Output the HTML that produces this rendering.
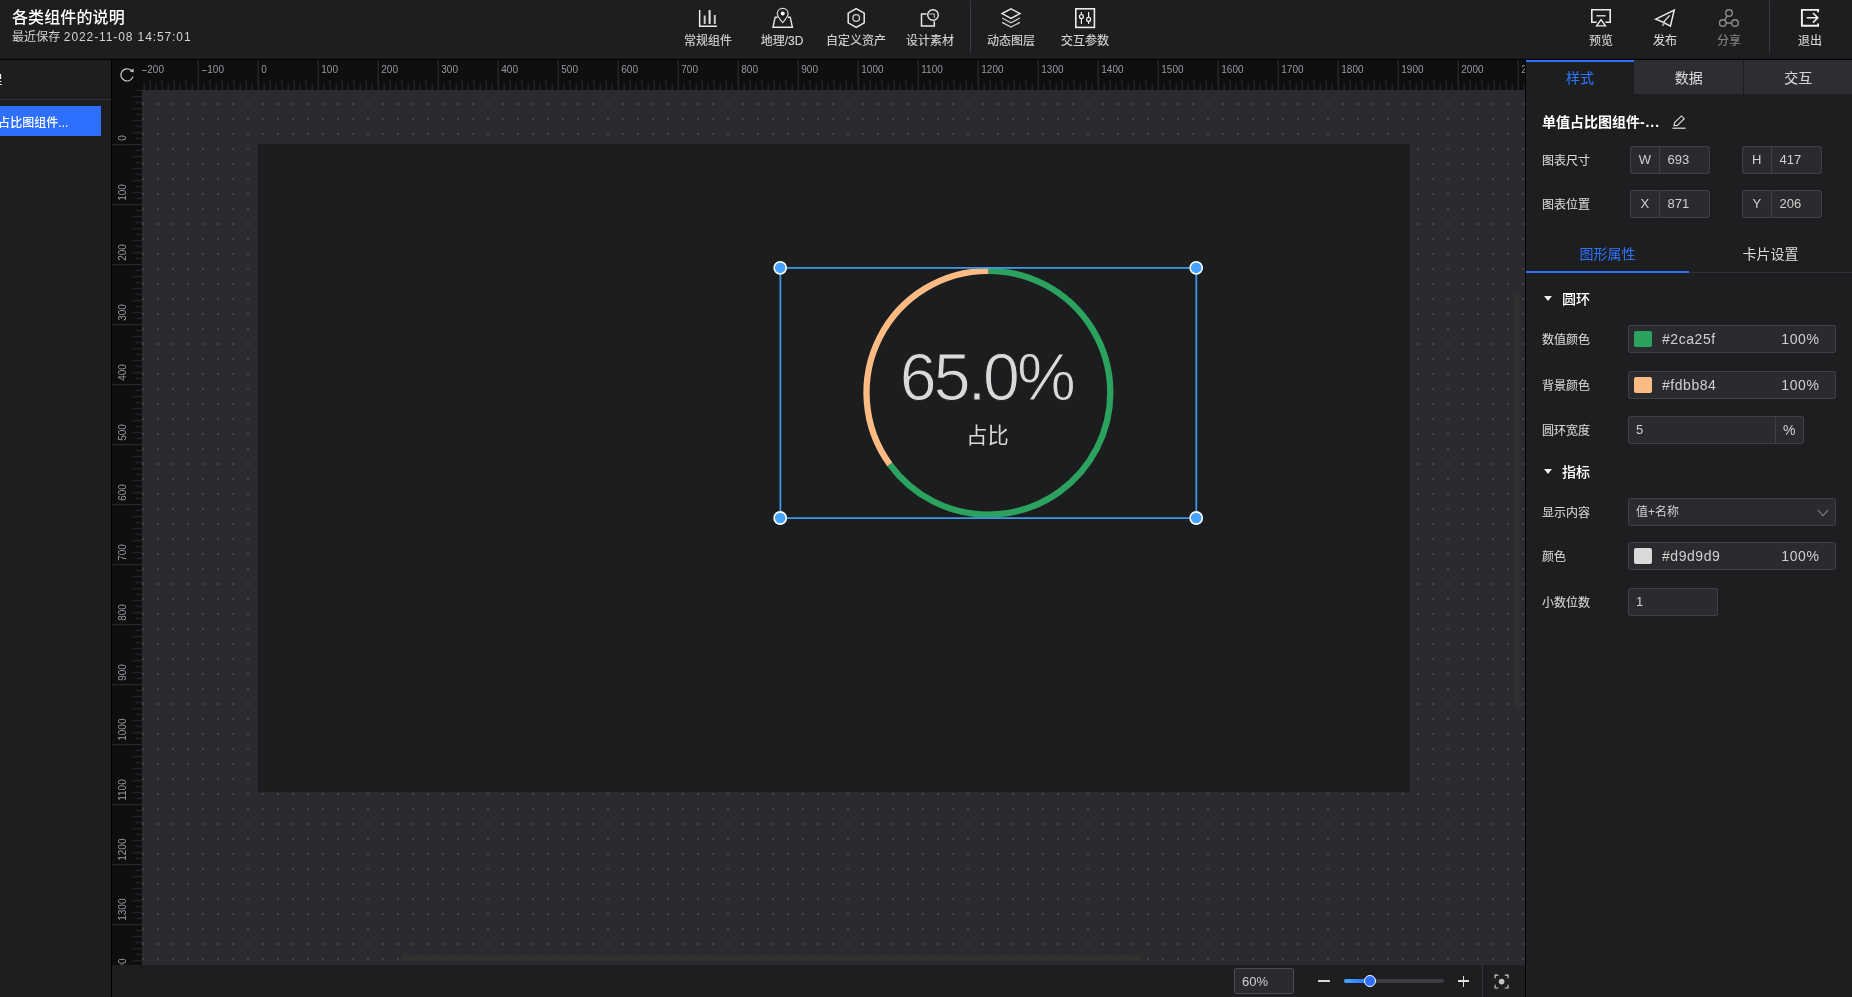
<!DOCTYPE html>
<html lang="zh-CN">
<head>
<meta charset="utf-8">
<title>各类组件的说明</title>
<style>
*{box-sizing:border-box;margin:0;padding:0}
html,body{width:1852px;height:997px;overflow:hidden;background:#1d1e20}
body{position:relative;will-change:transform;font-family:"Liberation Sans","Noto Sans CJK SC",sans-serif;color:#d4d4d4;font-size:12px;line-height:1}
.abs{position:absolute}
svg{position:absolute;overflow:visible}
/* header */
#hd{position:absolute;left:0;top:0;width:1852px;height:60px;background:#1d1e20;border-bottom:1px solid #030303;box-shadow:inset 0 -1px 0 #18191b}
#ttl{position:absolute;left:12px;top:9px;font-size:16px;line-height:18px;font-weight:500;color:#fff;white-space:nowrap;letter-spacing:0.12px}
#sav{position:absolute;left:12px;top:30px;font-size:12px;line-height:14px;color:#d2d2d2;white-space:nowrap;letter-spacing:0.1px}
#sav span{letter-spacing:0.9px}
.tb{position:absolute;top:0;width:74px;height:59px;text-align:center}
.tb span{-webkit-text-stroke:0.12px;position:absolute;left:-20px;right:-20px;top:33.7px;font-size:12px;line-height:14px;color:#d6d6d6;white-space:nowrap}
.tb.dis span{color:#858585}
.vsep{position:absolute;top:1px;width:1px;height:52px;background:#3a3b3e}
/* left */
#lp{position:absolute;left:0;top:60px;width:112px;height:937px;background:#1d1e20;overflow:hidden;border-right:1px solid #060607}
#lp .h{position:absolute;left:-46px;top:14px;width:48px;font-size:12px;line-height:12px;color:#fff;font-weight:500;white-space:nowrap}
#lp .ln{position:absolute;left:0;top:39px;width:111px;height:1px;background:#303134}
#lp .it{position:absolute;left:0;top:46px;width:101px;height:30px;background:#2e6fff;color:#fff;font-size:12px;line-height:30px;white-space:nowrap;overflow:hidden}
#lp .it b{font-weight:500;position:absolute;left:-26px;top:2.1px;letter-spacing:0.05px}
/* rulers + canvas */
#rb{position:absolute;left:111px;top:60px;width:1415px;height:937px;background:#0e0e0f;border-right:1px solid #000;border-left:1px solid #000}
#cv{position:absolute;left:142px;top:90px;width:1383px;height:875px;background-color:#2a2b2e;
background-image:radial-gradient(circle at 1px 1px,#434448 0.9px,rgba(67,68,72,0) 1.35px);background-size:15px 15px;background-position:0px -2px;overflow:hidden}
#pg{position:absolute;left:116px;top:54px;width:1152px;height:648px;background:#1c1d1f}
#rl text{font-family:"Liberation Sans",sans-serif;font-size:10px;fill:#95989e}
/* bottom */
#bt{position:absolute;left:112px;top:965px;width:1413px;height:32px;background:#1d1e20}
/* right panel */
#rp{position:absolute;left:1526px;top:60px;width:326px;height:937px;background:#1d1e20}
.tab{position:absolute;top:0;height:34px;line-height:36px;text-align:center;font-size:14px;color:#d4d4d4;background:#2d2e31;-webkit-text-stroke:0.1px}
.tab.on{background:#1d1e20;color:#2e74ff;border-top:2px solid #2e6fff;line-height:32px}
.lab{position:absolute;left:16px;font-size:12px;line-height:14px;color:#d6d6d6;white-space:nowrap;margin-top:0.6px;-webkit-text-stroke:0.1px #d6d6d6}
.box{position:absolute;height:28px;background:#2a2b2e;border:1px solid #3f4044;border-radius:2px;font-size:13px;line-height:26px;color:#d0d0d0;white-space:nowrap}
.box i{position:absolute;top:0;bottom:0;width:1px;background:#3f4044}
.box .p{position:absolute;left:0;top:0;width:27.6px;text-align:center;font-size:13px}
.box .v{position:absolute;top:0}
.sw{position:absolute;left:5px;top:5px;width:18px;height:16px;border-radius:2px}
.hex{position:absolute;left:33px;top:0;font-size:14px;letter-spacing:0.55px}
.pct{position:absolute;right:15.5px;top:0;font-size:14px;letter-spacing:0.6px}
.sec{position:absolute;left:36px;font-size:14px;line-height:16px;color:#fff;font-weight:500;white-space:nowrap}
.tri{position:absolute;left:17.6px;width:0;height:0;border-left:4.6px solid transparent;border-right:4.6px solid transparent;border-top:5.6px solid #ececec}
</style>
</head>
<body>
<!-- ================= HEADER ================= -->
<div id="hd">
  <div id="ttl">各类组件的说明</div>
  <div id="sav">最近保存 <span>2022-11-08 14:57:01</span></div>
  <!-- center tools -->
  <div class="tb" style="left:671px"><svg style="left:28px;top:9px" width="20" height="20" viewBox="0 0 20 20" fill="none" stroke="#ececec" stroke-width="1.5"><path d="M0.65 1.1 V17.35 H17.9"/><path d="M10.6 1.1 V14.9" stroke-width="2"/><path d="M5.7 6.4 V14.9 M15.8 6 V14.9" stroke-width="2" stroke="#c9c9c9"/></svg><span>常规组件</span></div>
  <div class="tb" style="left:745px"><svg style="left:27px;top:7px" width="22" height="22" viewBox="0 0 22 22" fill="none" stroke="#e8e8e8" stroke-width="1.4"><path d="M5.6 10.2 H3.2 L1 20.2 H20.4 L18.2 10.2 H15.8"/><path d="M10.7 1.3 C7.5 1.3 5.3 3.7 5.3 6.6 C5.3 9.8 8 12.6 10.7 15.6 C13.4 12.6 16.1 9.8 16.1 6.6 C16.1 3.7 13.9 1.3 10.7 1.3 Z" stroke="#d8d8d8" stroke-width="1.2"/><circle cx="10.7" cy="6.6" r="2" fill="#fff" stroke="none"/></svg><span>地理/3D</span></div>
  <div class="tb" style="left:819px"><svg style="left:27px;top:7px" width="22" height="22" viewBox="0 0 22 22" fill="none" stroke="#e8e8e8" stroke-width="1.5"><path d="M10.2 1.6 L18.2 6.2 V15.8 L10.2 20.4 L2.2 15.8 V6.2 Z"/><circle cx="10.2" cy="11" r="3.3" stroke="#cfcfcf" stroke-width="1.3"/></svg><span>自定义资产</span></div>
  <div class="tb" style="left:893px"><svg style="left:26px;top:7px" width="22" height="22" viewBox="0 0 22 22" fill="none" stroke="#e8e8e8" stroke-width="1.5"><path d="M7.6 7 H2.5 V19 H15.3 V14.2"/><circle cx="14" cy="8" r="5.3" stroke-width="1.4"/><path d="M10.2 7 H15.3 V11" stroke="#bdbdbd" stroke-width="1.1"/></svg><span>设计素材</span></div>
  <div class="vsep" style="left:970px"></div>
  <div class="tb" style="left:974px"><svg style="left:26px;top:7px" width="22" height="22" viewBox="0 0 22 22" fill="none" stroke="#e8e8e8" stroke-width="1.4" stroke-linejoin="miter"><path d="M11 1.8 L20 6.6 L11 11.4 L2 6.6 Z"/><path d="M2.1 11 L11 15.7 L19.9 11" stroke="#cfcfcf" stroke-width="1.2"/><path d="M2.1 15.4 L11 20.1 L19.9 15.4" stroke="#cfcfcf" stroke-width="1.2"/></svg><span>动态图层</span></div>
  <div class="tb" style="left:1048px"><svg style="left:26px;top:7px" width="22" height="22" viewBox="0 0 22 22" fill="none" stroke="#ececec" stroke-width="1.6"><rect x="1.8" y="1.8" width="18.6" height="18.6"/><path d="M7.4 5 V7.6 M7.4 11.6 V17 M14.6 5 V10.4 M14.6 14.4 V17" stroke-width="1.2"/><circle cx="7.4" cy="9.6" r="2" stroke-width="1.2"/><circle cx="14.6" cy="12.4" r="2" stroke-width="1.2"/></svg><span>交互参数</span></div>
  <!-- right tools -->
  <div class="tb" style="left:1564px"><svg style="left:26px;top:8px" width="22" height="20" viewBox="0 0 22 20" fill="none" stroke="#ececec" stroke-width="1.6"><path d="M6.6 14.2 H1.8 V1.8 H20.2 V14.2 H15.4"/><path d="M6.4 7.8 H15.6" stroke-width="1.3"/><path d="M11 11.6 L15.4 17.9 H6.6 Z" stroke-width="1.4"/></svg><span>预览</span></div>
  <div class="tb" style="left:1628px"><svg style="left:26px;top:8px" width="22" height="20" viewBox="0 0 22 20" fill="none" stroke="#ececec" stroke-width="1.5" stroke-linejoin="miter"><path d="M1.8 11.2 L20.2 2.2 L16.4 18.2 L9.4 14.4 Z"/><path d="M9.4 14.4 L15.6 7.4" stroke-width="1.3"/><path d="M9.4 14.4 L8.6 18 L10.8 15.4" stroke-width="1" stroke="#bbb"/></svg><span>发布</span></div>
  <div class="tb dis" style="left:1692px"><svg style="left:26px;top:8px" width="22" height="20" viewBox="0 0 22 20" fill="none" stroke="#8d8d8d" stroke-width="1.4"><circle cx="11" cy="5" r="3.3"/><circle cx="4.8" cy="15" r="3.3"/><circle cx="17" cy="15" r="3.3"/><path d="M9.2 7.8 L6.6 12.2 M8.1 15 H13.7"/></svg><span>分享</span></div>
  <div class="vsep" style="left:1769px"></div>
  <div class="tb" style="left:1773px"><svg style="left:27px;top:8px" width="22" height="20" viewBox="0 0 22 20" fill="none" stroke="#f2f2f2" stroke-width="1.9"><path d="M18.1 4.2 V1.9 H1.9 V17.7 H18.1 V15.4"/><path d="M6.8 9.8 H17.6 M13 5 L17.8 9.8 L13 14.6" stroke-width="1.6"/></svg><span>退出</span></div>

</div>
<!-- ================= LEFT PANEL ================= -->
<div id="lp">
  <div class="h">图层管理</div>
  <div class="ln"></div>
  <div class="it"><b>单值占比图组件...</b></div>
</div>
<!-- ================= RULERS / CANVAS ================= -->
<div id="rb"></div>
<div id="cv">
  <div id="pg"></div>
  <div class="abs" style="left:1373px;top:203px;width:5.8px;height:416.6px;border-radius:3px;background:rgba(48,48,48,0.9)"></div>
</div>
<!-- ================= CHART (page coords) ================= -->
<svg id="ch1" style="left:0;top:0" width="1852" height="997" viewBox="0 0 1852 997">
<g fill="none" stroke-width="6.3">
<path d="M988.40 270.80 A121.9 121.9 0 1 1 889.78 464.35" stroke="#2ca25f"/>
<path d="M889.78 464.35 A121.9 121.9 0 0 1 988.40 270.80" stroke="#fdbb84"/>
</g>
<text x="986.4" y="400.2" text-anchor="middle" font-family="'Liberation Sans',sans-serif" font-size="66.2" letter-spacing="-2.9" fill="#d9d9d9" stroke="#1c1d1f" stroke-width="1.1" paint-order="fill stroke">65.0%</text>
<text x="987.5" y="443.2" text-anchor="middle" font-family="'Liberation Sans','Noto Sans CJK SC',sans-serif" font-size="21.2" fill="#d9d9d9">占比</text>
<rect x="780.4" y="267.9" width="415.9" height="250.2" fill="none" stroke="#3f95e8" stroke-width="1.8"/>
<g fill="#45a3ff" stroke="#fff" stroke-width="1.6">
<circle cx="780.2" cy="267.8" r="6.1"/><circle cx="1196.2" cy="267.8" r="6.1"/><circle cx="780.2" cy="518" r="6.1"/><circle cx="1196.2" cy="518" r="6.1"/>
</g>
</svg>

<svg id="rl" style="left:0;top:0" width="1852" height="997" viewBox="0 0 1852 997">
<defs><clipPath id="ch"><rect x="142" y="60" width="1383" height="30"/></clipPath><clipPath id="cvv"><rect x="112" y="90" width="30" height="875"/></clipPath></defs>
<g clip-path="url(#ch)">
<rect x="143.4" y="83" width="1.5" height="7" fill="#222326"/>
<rect x="149.4" y="80" width="1.5" height="10" fill="#222326"/>
<rect x="155.4" y="83" width="1.5" height="7" fill="#222326"/>
<rect x="161.4" y="80" width="1.5" height="10" fill="#222326"/>
<rect x="167.4" y="83" width="1.5" height="7" fill="#222326"/>
<rect x="173.4" y="80" width="1.5" height="10" fill="#222326"/>
<rect x="179.4" y="83" width="1.5" height="7" fill="#222326"/>
<rect x="185.4" y="80" width="1.5" height="10" fill="#222326"/>
<rect x="191.4" y="83" width="1.5" height="7" fill="#222326"/>
<rect x="197.5" y="60" width="1.4" height="30" fill="#26272a"/>
<rect x="203.4" y="83" width="1.5" height="7" fill="#222326"/>
<rect x="209.4" y="80" width="1.5" height="10" fill="#222326"/>
<rect x="215.4" y="83" width="1.5" height="7" fill="#222326"/>
<rect x="221.4" y="80" width="1.5" height="10" fill="#222326"/>
<rect x="227.4" y="83" width="1.5" height="7" fill="#222326"/>
<rect x="233.4" y="80" width="1.5" height="10" fill="#222326"/>
<rect x="239.4" y="83" width="1.5" height="7" fill="#222326"/>
<rect x="245.4" y="80" width="1.5" height="10" fill="#222326"/>
<rect x="251.4" y="83" width="1.5" height="7" fill="#222326"/>
<rect x="257.5" y="60" width="1.4" height="30" fill="#26272a"/>
<rect x="263.4" y="83" width="1.5" height="7" fill="#222326"/>
<rect x="269.4" y="80" width="1.5" height="10" fill="#222326"/>
<rect x="275.4" y="83" width="1.5" height="7" fill="#222326"/>
<rect x="281.4" y="80" width="1.5" height="10" fill="#222326"/>
<rect x="287.4" y="83" width="1.5" height="7" fill="#222326"/>
<rect x="293.4" y="80" width="1.5" height="10" fill="#222326"/>
<rect x="299.4" y="83" width="1.5" height="7" fill="#222326"/>
<rect x="305.4" y="80" width="1.5" height="10" fill="#222326"/>
<rect x="311.4" y="83" width="1.5" height="7" fill="#222326"/>
<rect x="317.5" y="60" width="1.4" height="30" fill="#26272a"/>
<rect x="323.4" y="83" width="1.5" height="7" fill="#222326"/>
<rect x="329.4" y="80" width="1.5" height="10" fill="#222326"/>
<rect x="335.4" y="83" width="1.5" height="7" fill="#222326"/>
<rect x="341.4" y="80" width="1.5" height="10" fill="#222326"/>
<rect x="347.4" y="83" width="1.5" height="7" fill="#222326"/>
<rect x="353.4" y="80" width="1.5" height="10" fill="#222326"/>
<rect x="359.4" y="83" width="1.5" height="7" fill="#222326"/>
<rect x="365.4" y="80" width="1.5" height="10" fill="#222326"/>
<rect x="371.4" y="83" width="1.5" height="7" fill="#222326"/>
<rect x="377.5" y="60" width="1.4" height="30" fill="#26272a"/>
<rect x="383.4" y="83" width="1.5" height="7" fill="#222326"/>
<rect x="389.4" y="80" width="1.5" height="10" fill="#222326"/>
<rect x="395.4" y="83" width="1.5" height="7" fill="#222326"/>
<rect x="401.4" y="80" width="1.5" height="10" fill="#222326"/>
<rect x="407.4" y="83" width="1.5" height="7" fill="#222326"/>
<rect x="413.4" y="80" width="1.5" height="10" fill="#222326"/>
<rect x="419.4" y="83" width="1.5" height="7" fill="#222326"/>
<rect x="425.4" y="80" width="1.5" height="10" fill="#222326"/>
<rect x="431.4" y="83" width="1.5" height="7" fill="#222326"/>
<rect x="437.5" y="60" width="1.4" height="30" fill="#26272a"/>
<rect x="443.4" y="83" width="1.5" height="7" fill="#222326"/>
<rect x="449.4" y="80" width="1.5" height="10" fill="#222326"/>
<rect x="455.4" y="83" width="1.5" height="7" fill="#222326"/>
<rect x="461.4" y="80" width="1.5" height="10" fill="#222326"/>
<rect x="467.4" y="83" width="1.5" height="7" fill="#222326"/>
<rect x="473.4" y="80" width="1.5" height="10" fill="#222326"/>
<rect x="479.4" y="83" width="1.5" height="7" fill="#222326"/>
<rect x="485.4" y="80" width="1.5" height="10" fill="#222326"/>
<rect x="491.4" y="83" width="1.5" height="7" fill="#222326"/>
<rect x="497.5" y="60" width="1.4" height="30" fill="#26272a"/>
<rect x="503.4" y="83" width="1.5" height="7" fill="#222326"/>
<rect x="509.4" y="80" width="1.5" height="10" fill="#222326"/>
<rect x="515.4" y="83" width="1.5" height="7" fill="#222326"/>
<rect x="521.4" y="80" width="1.5" height="10" fill="#222326"/>
<rect x="527.4" y="83" width="1.5" height="7" fill="#222326"/>
<rect x="533.4" y="80" width="1.5" height="10" fill="#222326"/>
<rect x="539.4" y="83" width="1.5" height="7" fill="#222326"/>
<rect x="545.4" y="80" width="1.5" height="10" fill="#222326"/>
<rect x="551.4" y="83" width="1.5" height="7" fill="#222326"/>
<rect x="557.5" y="60" width="1.4" height="30" fill="#26272a"/>
<rect x="563.4" y="83" width="1.5" height="7" fill="#222326"/>
<rect x="569.4" y="80" width="1.5" height="10" fill="#222326"/>
<rect x="575.4" y="83" width="1.5" height="7" fill="#222326"/>
<rect x="581.4" y="80" width="1.5" height="10" fill="#222326"/>
<rect x="587.4" y="83" width="1.5" height="7" fill="#222326"/>
<rect x="593.4" y="80" width="1.5" height="10" fill="#222326"/>
<rect x="599.4" y="83" width="1.5" height="7" fill="#222326"/>
<rect x="605.4" y="80" width="1.5" height="10" fill="#222326"/>
<rect x="611.4" y="83" width="1.5" height="7" fill="#222326"/>
<rect x="617.5" y="60" width="1.4" height="30" fill="#26272a"/>
<rect x="623.4" y="83" width="1.5" height="7" fill="#222326"/>
<rect x="629.4" y="80" width="1.5" height="10" fill="#222326"/>
<rect x="635.4" y="83" width="1.5" height="7" fill="#222326"/>
<rect x="641.4" y="80" width="1.5" height="10" fill="#222326"/>
<rect x="647.4" y="83" width="1.5" height="7" fill="#222326"/>
<rect x="653.4" y="80" width="1.5" height="10" fill="#222326"/>
<rect x="659.4" y="83" width="1.5" height="7" fill="#222326"/>
<rect x="665.4" y="80" width="1.5" height="10" fill="#222326"/>
<rect x="671.4" y="83" width="1.5" height="7" fill="#222326"/>
<rect x="677.5" y="60" width="1.4" height="30" fill="#26272a"/>
<rect x="683.4" y="83" width="1.5" height="7" fill="#222326"/>
<rect x="689.4" y="80" width="1.5" height="10" fill="#222326"/>
<rect x="695.4" y="83" width="1.5" height="7" fill="#222326"/>
<rect x="701.4" y="80" width="1.5" height="10" fill="#222326"/>
<rect x="707.4" y="83" width="1.5" height="7" fill="#222326"/>
<rect x="713.4" y="80" width="1.5" height="10" fill="#222326"/>
<rect x="719.4" y="83" width="1.5" height="7" fill="#222326"/>
<rect x="725.4" y="80" width="1.5" height="10" fill="#222326"/>
<rect x="731.4" y="83" width="1.5" height="7" fill="#222326"/>
<rect x="737.5" y="60" width="1.4" height="30" fill="#26272a"/>
<rect x="743.4" y="83" width="1.5" height="7" fill="#222326"/>
<rect x="749.4" y="80" width="1.5" height="10" fill="#222326"/>
<rect x="755.4" y="83" width="1.5" height="7" fill="#222326"/>
<rect x="761.4" y="80" width="1.5" height="10" fill="#222326"/>
<rect x="767.4" y="83" width="1.5" height="7" fill="#222326"/>
<rect x="773.4" y="80" width="1.5" height="10" fill="#222326"/>
<rect x="779.4" y="83" width="1.5" height="7" fill="#222326"/>
<rect x="785.4" y="80" width="1.5" height="10" fill="#222326"/>
<rect x="791.4" y="83" width="1.5" height="7" fill="#222326"/>
<rect x="797.5" y="60" width="1.4" height="30" fill="#26272a"/>
<rect x="803.4" y="83" width="1.5" height="7" fill="#222326"/>
<rect x="809.4" y="80" width="1.5" height="10" fill="#222326"/>
<rect x="815.4" y="83" width="1.5" height="7" fill="#222326"/>
<rect x="821.4" y="80" width="1.5" height="10" fill="#222326"/>
<rect x="827.4" y="83" width="1.5" height="7" fill="#222326"/>
<rect x="833.4" y="80" width="1.5" height="10" fill="#222326"/>
<rect x="839.4" y="83" width="1.5" height="7" fill="#222326"/>
<rect x="845.4" y="80" width="1.5" height="10" fill="#222326"/>
<rect x="851.4" y="83" width="1.5" height="7" fill="#222326"/>
<rect x="857.5" y="60" width="1.4" height="30" fill="#26272a"/>
<rect x="863.4" y="83" width="1.5" height="7" fill="#222326"/>
<rect x="869.4" y="80" width="1.5" height="10" fill="#222326"/>
<rect x="875.4" y="83" width="1.5" height="7" fill="#222326"/>
<rect x="881.4" y="80" width="1.5" height="10" fill="#222326"/>
<rect x="887.4" y="83" width="1.5" height="7" fill="#222326"/>
<rect x="893.4" y="80" width="1.5" height="10" fill="#222326"/>
<rect x="899.4" y="83" width="1.5" height="7" fill="#222326"/>
<rect x="905.4" y="80" width="1.5" height="10" fill="#222326"/>
<rect x="911.4" y="83" width="1.5" height="7" fill="#222326"/>
<rect x="917.5" y="60" width="1.4" height="30" fill="#26272a"/>
<rect x="923.4" y="83" width="1.5" height="7" fill="#222326"/>
<rect x="929.4" y="80" width="1.5" height="10" fill="#222326"/>
<rect x="935.4" y="83" width="1.5" height="7" fill="#222326"/>
<rect x="941.4" y="80" width="1.5" height="10" fill="#222326"/>
<rect x="947.4" y="83" width="1.5" height="7" fill="#222326"/>
<rect x="953.4" y="80" width="1.5" height="10" fill="#222326"/>
<rect x="959.4" y="83" width="1.5" height="7" fill="#222326"/>
<rect x="965.4" y="80" width="1.5" height="10" fill="#222326"/>
<rect x="971.4" y="83" width="1.5" height="7" fill="#222326"/>
<rect x="977.5" y="60" width="1.4" height="30" fill="#26272a"/>
<rect x="983.4" y="83" width="1.5" height="7" fill="#222326"/>
<rect x="989.4" y="80" width="1.5" height="10" fill="#222326"/>
<rect x="995.4" y="83" width="1.5" height="7" fill="#222326"/>
<rect x="1001.4" y="80" width="1.5" height="10" fill="#222326"/>
<rect x="1007.4" y="83" width="1.5" height="7" fill="#222326"/>
<rect x="1013.4" y="80" width="1.5" height="10" fill="#222326"/>
<rect x="1019.4" y="83" width="1.5" height="7" fill="#222326"/>
<rect x="1025.4" y="80" width="1.5" height="10" fill="#222326"/>
<rect x="1031.4" y="83" width="1.5" height="7" fill="#222326"/>
<rect x="1037.5" y="60" width="1.4" height="30" fill="#26272a"/>
<rect x="1043.4" y="83" width="1.5" height="7" fill="#222326"/>
<rect x="1049.4" y="80" width="1.5" height="10" fill="#222326"/>
<rect x="1055.4" y="83" width="1.5" height="7" fill="#222326"/>
<rect x="1061.4" y="80" width="1.5" height="10" fill="#222326"/>
<rect x="1067.4" y="83" width="1.5" height="7" fill="#222326"/>
<rect x="1073.4" y="80" width="1.5" height="10" fill="#222326"/>
<rect x="1079.4" y="83" width="1.5" height="7" fill="#222326"/>
<rect x="1085.4" y="80" width="1.5" height="10" fill="#222326"/>
<rect x="1091.4" y="83" width="1.5" height="7" fill="#222326"/>
<rect x="1097.5" y="60" width="1.4" height="30" fill="#26272a"/>
<rect x="1103.4" y="83" width="1.5" height="7" fill="#222326"/>
<rect x="1109.4" y="80" width="1.5" height="10" fill="#222326"/>
<rect x="1115.4" y="83" width="1.5" height="7" fill="#222326"/>
<rect x="1121.4" y="80" width="1.5" height="10" fill="#222326"/>
<rect x="1127.4" y="83" width="1.5" height="7" fill="#222326"/>
<rect x="1133.4" y="80" width="1.5" height="10" fill="#222326"/>
<rect x="1139.4" y="83" width="1.5" height="7" fill="#222326"/>
<rect x="1145.4" y="80" width="1.5" height="10" fill="#222326"/>
<rect x="1151.4" y="83" width="1.5" height="7" fill="#222326"/>
<rect x="1157.5" y="60" width="1.4" height="30" fill="#26272a"/>
<rect x="1163.4" y="83" width="1.5" height="7" fill="#222326"/>
<rect x="1169.4" y="80" width="1.5" height="10" fill="#222326"/>
<rect x="1175.4" y="83" width="1.5" height="7" fill="#222326"/>
<rect x="1181.4" y="80" width="1.5" height="10" fill="#222326"/>
<rect x="1187.4" y="83" width="1.5" height="7" fill="#222326"/>
<rect x="1193.4" y="80" width="1.5" height="10" fill="#222326"/>
<rect x="1199.4" y="83" width="1.5" height="7" fill="#222326"/>
<rect x="1205.4" y="80" width="1.5" height="10" fill="#222326"/>
<rect x="1211.4" y="83" width="1.5" height="7" fill="#222326"/>
<rect x="1217.5" y="60" width="1.4" height="30" fill="#26272a"/>
<rect x="1223.4" y="83" width="1.5" height="7" fill="#222326"/>
<rect x="1229.4" y="80" width="1.5" height="10" fill="#222326"/>
<rect x="1235.4" y="83" width="1.5" height="7" fill="#222326"/>
<rect x="1241.4" y="80" width="1.5" height="10" fill="#222326"/>
<rect x="1247.4" y="83" width="1.5" height="7" fill="#222326"/>
<rect x="1253.4" y="80" width="1.5" height="10" fill="#222326"/>
<rect x="1259.4" y="83" width="1.5" height="7" fill="#222326"/>
<rect x="1265.4" y="80" width="1.5" height="10" fill="#222326"/>
<rect x="1271.4" y="83" width="1.5" height="7" fill="#222326"/>
<rect x="1277.5" y="60" width="1.4" height="30" fill="#26272a"/>
<rect x="1283.4" y="83" width="1.5" height="7" fill="#222326"/>
<rect x="1289.4" y="80" width="1.5" height="10" fill="#222326"/>
<rect x="1295.4" y="83" width="1.5" height="7" fill="#222326"/>
<rect x="1301.4" y="80" width="1.5" height="10" fill="#222326"/>
<rect x="1307.4" y="83" width="1.5" height="7" fill="#222326"/>
<rect x="1313.4" y="80" width="1.5" height="10" fill="#222326"/>
<rect x="1319.4" y="83" width="1.5" height="7" fill="#222326"/>
<rect x="1325.4" y="80" width="1.5" height="10" fill="#222326"/>
<rect x="1331.4" y="83" width="1.5" height="7" fill="#222326"/>
<rect x="1337.5" y="60" width="1.4" height="30" fill="#26272a"/>
<rect x="1343.4" y="83" width="1.5" height="7" fill="#222326"/>
<rect x="1349.4" y="80" width="1.5" height="10" fill="#222326"/>
<rect x="1355.4" y="83" width="1.5" height="7" fill="#222326"/>
<rect x="1361.4" y="80" width="1.5" height="10" fill="#222326"/>
<rect x="1367.4" y="83" width="1.5" height="7" fill="#222326"/>
<rect x="1373.4" y="80" width="1.5" height="10" fill="#222326"/>
<rect x="1379.4" y="83" width="1.5" height="7" fill="#222326"/>
<rect x="1385.4" y="80" width="1.5" height="10" fill="#222326"/>
<rect x="1391.4" y="83" width="1.5" height="7" fill="#222326"/>
<rect x="1397.5" y="60" width="1.4" height="30" fill="#26272a"/>
<rect x="1403.4" y="83" width="1.5" height="7" fill="#222326"/>
<rect x="1409.4" y="80" width="1.5" height="10" fill="#222326"/>
<rect x="1415.4" y="83" width="1.5" height="7" fill="#222326"/>
<rect x="1421.4" y="80" width="1.5" height="10" fill="#222326"/>
<rect x="1427.4" y="83" width="1.5" height="7" fill="#222326"/>
<rect x="1433.4" y="80" width="1.5" height="10" fill="#222326"/>
<rect x="1439.4" y="83" width="1.5" height="7" fill="#222326"/>
<rect x="1445.4" y="80" width="1.5" height="10" fill="#222326"/>
<rect x="1451.4" y="83" width="1.5" height="7" fill="#222326"/>
<rect x="1457.5" y="60" width="1.4" height="30" fill="#26272a"/>
<rect x="1463.4" y="83" width="1.5" height="7" fill="#222326"/>
<rect x="1469.4" y="80" width="1.5" height="10" fill="#222326"/>
<rect x="1475.4" y="83" width="1.5" height="7" fill="#222326"/>
<rect x="1481.4" y="80" width="1.5" height="10" fill="#222326"/>
<rect x="1487.4" y="83" width="1.5" height="7" fill="#222326"/>
<rect x="1493.4" y="80" width="1.5" height="10" fill="#222326"/>
<rect x="1499.4" y="83" width="1.5" height="7" fill="#222326"/>
<rect x="1505.4" y="80" width="1.5" height="10" fill="#222326"/>
<rect x="1511.4" y="83" width="1.5" height="7" fill="#222326"/>
<rect x="1517.5" y="60" width="1.4" height="30" fill="#26272a"/>
<rect x="1523.4" y="83" width="1.5" height="7" fill="#222326"/>
<text transform="translate(141.3 73.1) scale(1.9 1)">-</text><text x="147.3" y="73.1">200</text>
<text transform="translate(201.3 73.1) scale(1.9 1)">-</text><text x="207.3" y="73.1">100</text>
<text x="261.3" y="73.1">0</text>
<text x="321.3" y="73.1">100</text>
<text x="381.3" y="73.1">200</text>
<text x="441.3" y="73.1">300</text>
<text x="501.3" y="73.1">400</text>
<text x="561.3" y="73.1">500</text>
<text x="621.3" y="73.1">600</text>
<text x="681.3" y="73.1">700</text>
<text x="741.3" y="73.1">800</text>
<text x="801.3" y="73.1">900</text>
<text x="861.3" y="73.1">1000</text>
<text x="921.3" y="73.1">1100</text>
<text x="981.3" y="73.1">1200</text>
<text x="1041.3" y="73.1">1300</text>
<text x="1101.3" y="73.1">1400</text>
<text x="1161.3" y="73.1">1500</text>
<text x="1221.3" y="73.1">1600</text>
<text x="1281.3" y="73.1">1700</text>
<text x="1341.3" y="73.1">1800</text>
<text x="1401.3" y="73.1">1900</text>
<text x="1461.3" y="73.1">2000</text>
<text x="1521.3" y="73.1">2100</text>
</g>
<g clip-path="url(#cvv)">
<rect x="135.5" y="89.8" width="6.5" height="1.5" fill="#222326"/>
<rect x="132.5" y="95.8" width="9.5" height="1.5" fill="#222326"/>
<rect x="135.5" y="101.8" width="6.5" height="1.5" fill="#222326"/>
<rect x="132.5" y="107.8" width="9.5" height="1.5" fill="#222326"/>
<rect x="135.5" y="113.8" width="6.5" height="1.5" fill="#222326"/>
<rect x="132.5" y="119.8" width="9.5" height="1.5" fill="#222326"/>
<rect x="135.5" y="125.8" width="6.5" height="1.5" fill="#222326"/>
<rect x="132.5" y="131.8" width="9.5" height="1.5" fill="#222326"/>
<rect x="135.5" y="137.8" width="6.5" height="1.5" fill="#222326"/>
<rect x="112" y="143.9" width="30" height="1.4" fill="#26272a"/>
<rect x="135.5" y="149.8" width="6.5" height="1.5" fill="#222326"/>
<rect x="132.5" y="155.8" width="9.5" height="1.5" fill="#222326"/>
<rect x="135.5" y="161.8" width="6.5" height="1.5" fill="#222326"/>
<rect x="132.5" y="167.8" width="9.5" height="1.5" fill="#222326"/>
<rect x="135.5" y="173.8" width="6.5" height="1.5" fill="#222326"/>
<rect x="132.5" y="179.8" width="9.5" height="1.5" fill="#222326"/>
<rect x="135.5" y="185.8" width="6.5" height="1.5" fill="#222326"/>
<rect x="132.5" y="191.8" width="9.5" height="1.5" fill="#222326"/>
<rect x="135.5" y="197.8" width="6.5" height="1.5" fill="#222326"/>
<rect x="112" y="203.9" width="30" height="1.4" fill="#26272a"/>
<rect x="135.5" y="209.8" width="6.5" height="1.5" fill="#222326"/>
<rect x="132.5" y="215.8" width="9.5" height="1.5" fill="#222326"/>
<rect x="135.5" y="221.8" width="6.5" height="1.5" fill="#222326"/>
<rect x="132.5" y="227.8" width="9.5" height="1.5" fill="#222326"/>
<rect x="135.5" y="233.8" width="6.5" height="1.5" fill="#222326"/>
<rect x="132.5" y="239.8" width="9.5" height="1.5" fill="#222326"/>
<rect x="135.5" y="245.8" width="6.5" height="1.5" fill="#222326"/>
<rect x="132.5" y="251.8" width="9.5" height="1.5" fill="#222326"/>
<rect x="135.5" y="257.8" width="6.5" height="1.5" fill="#222326"/>
<rect x="112" y="263.9" width="30" height="1.4" fill="#26272a"/>
<rect x="135.5" y="269.8" width="6.5" height="1.5" fill="#222326"/>
<rect x="132.5" y="275.8" width="9.5" height="1.5" fill="#222326"/>
<rect x="135.5" y="281.8" width="6.5" height="1.5" fill="#222326"/>
<rect x="132.5" y="287.8" width="9.5" height="1.5" fill="#222326"/>
<rect x="135.5" y="293.8" width="6.5" height="1.5" fill="#222326"/>
<rect x="132.5" y="299.8" width="9.5" height="1.5" fill="#222326"/>
<rect x="135.5" y="305.8" width="6.5" height="1.5" fill="#222326"/>
<rect x="132.5" y="311.8" width="9.5" height="1.5" fill="#222326"/>
<rect x="135.5" y="317.8" width="6.5" height="1.5" fill="#222326"/>
<rect x="112" y="323.9" width="30" height="1.4" fill="#26272a"/>
<rect x="135.5" y="329.8" width="6.5" height="1.5" fill="#222326"/>
<rect x="132.5" y="335.8" width="9.5" height="1.5" fill="#222326"/>
<rect x="135.5" y="341.8" width="6.5" height="1.5" fill="#222326"/>
<rect x="132.5" y="347.8" width="9.5" height="1.5" fill="#222326"/>
<rect x="135.5" y="353.8" width="6.5" height="1.5" fill="#222326"/>
<rect x="132.5" y="359.8" width="9.5" height="1.5" fill="#222326"/>
<rect x="135.5" y="365.8" width="6.5" height="1.5" fill="#222326"/>
<rect x="132.5" y="371.8" width="9.5" height="1.5" fill="#222326"/>
<rect x="135.5" y="377.8" width="6.5" height="1.5" fill="#222326"/>
<rect x="112" y="383.9" width="30" height="1.4" fill="#26272a"/>
<rect x="135.5" y="389.8" width="6.5" height="1.5" fill="#222326"/>
<rect x="132.5" y="395.8" width="9.5" height="1.5" fill="#222326"/>
<rect x="135.5" y="401.8" width="6.5" height="1.5" fill="#222326"/>
<rect x="132.5" y="407.8" width="9.5" height="1.5" fill="#222326"/>
<rect x="135.5" y="413.8" width="6.5" height="1.5" fill="#222326"/>
<rect x="132.5" y="419.8" width="9.5" height="1.5" fill="#222326"/>
<rect x="135.5" y="425.8" width="6.5" height="1.5" fill="#222326"/>
<rect x="132.5" y="431.8" width="9.5" height="1.5" fill="#222326"/>
<rect x="135.5" y="437.8" width="6.5" height="1.5" fill="#222326"/>
<rect x="112" y="443.9" width="30" height="1.4" fill="#26272a"/>
<rect x="135.5" y="449.8" width="6.5" height="1.5" fill="#222326"/>
<rect x="132.5" y="455.8" width="9.5" height="1.5" fill="#222326"/>
<rect x="135.5" y="461.8" width="6.5" height="1.5" fill="#222326"/>
<rect x="132.5" y="467.8" width="9.5" height="1.5" fill="#222326"/>
<rect x="135.5" y="473.8" width="6.5" height="1.5" fill="#222326"/>
<rect x="132.5" y="479.8" width="9.5" height="1.5" fill="#222326"/>
<rect x="135.5" y="485.8" width="6.5" height="1.5" fill="#222326"/>
<rect x="132.5" y="491.8" width="9.5" height="1.5" fill="#222326"/>
<rect x="135.5" y="497.8" width="6.5" height="1.5" fill="#222326"/>
<rect x="112" y="503.9" width="30" height="1.4" fill="#26272a"/>
<rect x="135.5" y="509.8" width="6.5" height="1.5" fill="#222326"/>
<rect x="132.5" y="515.8" width="9.5" height="1.5" fill="#222326"/>
<rect x="135.5" y="521.8" width="6.5" height="1.5" fill="#222326"/>
<rect x="132.5" y="527.8" width="9.5" height="1.5" fill="#222326"/>
<rect x="135.5" y="533.8" width="6.5" height="1.5" fill="#222326"/>
<rect x="132.5" y="539.8" width="9.5" height="1.5" fill="#222326"/>
<rect x="135.5" y="545.8" width="6.5" height="1.5" fill="#222326"/>
<rect x="132.5" y="551.8" width="9.5" height="1.5" fill="#222326"/>
<rect x="135.5" y="557.8" width="6.5" height="1.5" fill="#222326"/>
<rect x="112" y="563.9" width="30" height="1.4" fill="#26272a"/>
<rect x="135.5" y="569.8" width="6.5" height="1.5" fill="#222326"/>
<rect x="132.5" y="575.8" width="9.5" height="1.5" fill="#222326"/>
<rect x="135.5" y="581.8" width="6.5" height="1.5" fill="#222326"/>
<rect x="132.5" y="587.8" width="9.5" height="1.5" fill="#222326"/>
<rect x="135.5" y="593.8" width="6.5" height="1.5" fill="#222326"/>
<rect x="132.5" y="599.8" width="9.5" height="1.5" fill="#222326"/>
<rect x="135.5" y="605.8" width="6.5" height="1.5" fill="#222326"/>
<rect x="132.5" y="611.8" width="9.5" height="1.5" fill="#222326"/>
<rect x="135.5" y="617.8" width="6.5" height="1.5" fill="#222326"/>
<rect x="112" y="623.9" width="30" height="1.4" fill="#26272a"/>
<rect x="135.5" y="629.8" width="6.5" height="1.5" fill="#222326"/>
<rect x="132.5" y="635.8" width="9.5" height="1.5" fill="#222326"/>
<rect x="135.5" y="641.8" width="6.5" height="1.5" fill="#222326"/>
<rect x="132.5" y="647.8" width="9.5" height="1.5" fill="#222326"/>
<rect x="135.5" y="653.8" width="6.5" height="1.5" fill="#222326"/>
<rect x="132.5" y="659.8" width="9.5" height="1.5" fill="#222326"/>
<rect x="135.5" y="665.8" width="6.5" height="1.5" fill="#222326"/>
<rect x="132.5" y="671.8" width="9.5" height="1.5" fill="#222326"/>
<rect x="135.5" y="677.8" width="6.5" height="1.5" fill="#222326"/>
<rect x="112" y="683.9" width="30" height="1.4" fill="#26272a"/>
<rect x="135.5" y="689.8" width="6.5" height="1.5" fill="#222326"/>
<rect x="132.5" y="695.8" width="9.5" height="1.5" fill="#222326"/>
<rect x="135.5" y="701.8" width="6.5" height="1.5" fill="#222326"/>
<rect x="132.5" y="707.8" width="9.5" height="1.5" fill="#222326"/>
<rect x="135.5" y="713.8" width="6.5" height="1.5" fill="#222326"/>
<rect x="132.5" y="719.8" width="9.5" height="1.5" fill="#222326"/>
<rect x="135.5" y="725.8" width="6.5" height="1.5" fill="#222326"/>
<rect x="132.5" y="731.8" width="9.5" height="1.5" fill="#222326"/>
<rect x="135.5" y="737.8" width="6.5" height="1.5" fill="#222326"/>
<rect x="112" y="743.9" width="30" height="1.4" fill="#26272a"/>
<rect x="135.5" y="749.8" width="6.5" height="1.5" fill="#222326"/>
<rect x="132.5" y="755.8" width="9.5" height="1.5" fill="#222326"/>
<rect x="135.5" y="761.8" width="6.5" height="1.5" fill="#222326"/>
<rect x="132.5" y="767.8" width="9.5" height="1.5" fill="#222326"/>
<rect x="135.5" y="773.8" width="6.5" height="1.5" fill="#222326"/>
<rect x="132.5" y="779.8" width="9.5" height="1.5" fill="#222326"/>
<rect x="135.5" y="785.8" width="6.5" height="1.5" fill="#222326"/>
<rect x="132.5" y="791.8" width="9.5" height="1.5" fill="#222326"/>
<rect x="135.5" y="797.8" width="6.5" height="1.5" fill="#222326"/>
<rect x="112" y="803.9" width="30" height="1.4" fill="#26272a"/>
<rect x="135.5" y="809.8" width="6.5" height="1.5" fill="#222326"/>
<rect x="132.5" y="815.8" width="9.5" height="1.5" fill="#222326"/>
<rect x="135.5" y="821.8" width="6.5" height="1.5" fill="#222326"/>
<rect x="132.5" y="827.8" width="9.5" height="1.5" fill="#222326"/>
<rect x="135.5" y="833.8" width="6.5" height="1.5" fill="#222326"/>
<rect x="132.5" y="839.8" width="9.5" height="1.5" fill="#222326"/>
<rect x="135.5" y="845.8" width="6.5" height="1.5" fill="#222326"/>
<rect x="132.5" y="851.8" width="9.5" height="1.5" fill="#222326"/>
<rect x="135.5" y="857.8" width="6.5" height="1.5" fill="#222326"/>
<rect x="112" y="863.9" width="30" height="1.4" fill="#26272a"/>
<rect x="135.5" y="869.8" width="6.5" height="1.5" fill="#222326"/>
<rect x="132.5" y="875.8" width="9.5" height="1.5" fill="#222326"/>
<rect x="135.5" y="881.8" width="6.5" height="1.5" fill="#222326"/>
<rect x="132.5" y="887.8" width="9.5" height="1.5" fill="#222326"/>
<rect x="135.5" y="893.8" width="6.5" height="1.5" fill="#222326"/>
<rect x="132.5" y="899.8" width="9.5" height="1.5" fill="#222326"/>
<rect x="135.5" y="905.8" width="6.5" height="1.5" fill="#222326"/>
<rect x="132.5" y="911.8" width="9.5" height="1.5" fill="#222326"/>
<rect x="135.5" y="917.8" width="6.5" height="1.5" fill="#222326"/>
<rect x="112" y="923.9" width="30" height="1.4" fill="#26272a"/>
<rect x="135.5" y="929.8" width="6.5" height="1.5" fill="#222326"/>
<rect x="132.5" y="935.8" width="9.5" height="1.5" fill="#222326"/>
<rect x="135.5" y="941.8" width="6.5" height="1.5" fill="#222326"/>
<rect x="132.5" y="947.8" width="9.5" height="1.5" fill="#222326"/>
<rect x="135.5" y="953.8" width="6.5" height="1.5" fill="#222326"/>
<rect x="132.5" y="959.8" width="9.5" height="1.5" fill="#222326"/>
<text transform="translate(125.8 140.8) rotate(-90)">0</text>
<text transform="translate(125.8 200.8) rotate(-90)">100</text>
<text transform="translate(125.8 260.8) rotate(-90)">200</text>
<text transform="translate(125.8 320.8) rotate(-90)">300</text>
<text transform="translate(125.8 380.8) rotate(-90)">400</text>
<text transform="translate(125.8 440.8) rotate(-90)">500</text>
<text transform="translate(125.8 500.8) rotate(-90)">600</text>
<text transform="translate(125.8 560.8) rotate(-90)">700</text>
<text transform="translate(125.8 620.8) rotate(-90)">800</text>
<text transform="translate(125.8 680.8) rotate(-90)">900</text>
<text transform="translate(125.8 740.8) rotate(-90)">1000</text>
<text transform="translate(125.8 800.8) rotate(-90)">1100</text>
<text transform="translate(125.8 860.8) rotate(-90)">1200</text>
<text transform="translate(125.8 920.8) rotate(-90)">1300</text>
<text transform="translate(125.8 980.8) rotate(-90)">1400</text>
</g>
<!-- refresh icon -->
<g fill="none" stroke="#cfcfcf" stroke-width="1.2">
<path d="M131.3 70.5 A6.1 6.1 0 1 0 132.9 76.6"/>
<path d="M133.7 68.4 L133.4 72.5 L129.7 71.3 Z" fill="#cfcfcf" stroke="none"/>
</g>
</svg>
<!-- ================= BOTTOM BAR ================= -->
<div id="bt">
  <div class="abs" style="left:289px;top:-9.6px;width:740px;height:5.8px;border-radius:3px;background:rgba(50,50,48,0.85)"></div>
  <div class="box" style="left:1122px;top:3px;width:60px;height:26px;line-height:25px;border-color:#4a4b4e"><span class="v" style="left:7px;font-size:13px">60%</span></div>
  <div class="abs" style="left:1206px;top:15px;width:12px;height:1.6px;background:#d8d8d8"></div>
  <div class="abs" style="left:1232px;top:14px;width:100px;height:4px;border-radius:2px;background:#3d3e43"></div>
  <div class="abs" style="left:1232px;top:14px;width:26px;height:4px;border-radius:2px;background:linear-gradient(90deg,#44a2ff,#2e6fff)"></div>
  <div class="abs" style="left:1252px;top:10px;width:12px;height:12px;border-radius:6px;background:#2e6fff;border:1.6px solid #fff"></div>
  <div class="abs" style="left:1346px;top:15.2px;width:11px;height:1.6px;background:#e0e0e0"></div>
  <div class="abs" style="left:1350.7px;top:10.5px;width:1.6px;height:11px;background:#e0e0e0"></div>
  <div class="abs" style="left:1370px;top:0;width:1px;height:32px;background:#333437"></div>
  <svg style="left:1381.5px;top:8.6px" width="15.2" height="15.2" viewBox="0 0 16 16" fill="none" stroke="#d0d0d0" stroke-width="1.2"><path d="M1.2 4.6 V1.2 H4.6 M11.4 1.2 H14.8 V4.6 M14.8 11.4 V14.8 H11.4 M4.6 14.8 H1.2 V11.4"/><circle cx="8" cy="8" r="3" fill="#c4c4c4" stroke="none"/></svg>

</div>
<!-- ================= RIGHT PANEL ================= -->
<div id="rp">
  <div class="tab on" style="left:0;width:108px">样式</div>
  <div class="tab" style="left:108px;width:109.33px">数据</div>
  <div class="tab" style="left:217.33px;width:108.67px;border-left:1px solid #1d1e20">交互</div>
  <div class="abs" style="left:16px;top:54px;font-size:14px;line-height:16px;font-weight:700;color:#fff;white-space:nowrap">单值占比图组件<span style="letter-spacing:0.9px">-...</span></div>
  <svg style="left:146px;top:55px" width="14" height="14" viewBox="0 0 14 14" fill="none" stroke="#e0e0e0" stroke-width="1.1"><path d="M0.4 13.2 H13.6" stroke-width="1.2"/><path d="M2 10.6 L2.6 7.6 L9.4 0.9 L12.2 3.7 L5.4 10.4 Z"/></svg>
  <div class="lab" style="top:93px">图表尺寸</div>
  <div class="box" style="left:104px;top:86px;width:80px"><span class="p">W</span><i style="left:27.6px"></i><span class="v" style="left:36.5px">693</span></div>
  <div class="box" style="left:216px;top:86px;width:80px"><span class="p">H</span><i style="left:27.6px"></i><span class="v" style="left:36.5px">417</span></div>
  <div class="lab" style="top:137px">图表位置</div>
  <div class="box" style="left:104px;top:130px;width:80px"><span class="p">X</span><i style="left:27.6px"></i><span class="v" style="left:36.5px">871</span></div>
  <div class="box" style="left:216px;top:130px;width:80px"><span class="p">Y</span><i style="left:27.6px"></i><span class="v" style="left:36.5px">206</span></div>
  <div class="abs" style="left:0;top:212px;width:326px;height:1px;background:#2f3033"></div>
  <div class="abs" style="left:0;top:211px;width:163px;height:2px;background:#2e6fff"></div>
  <div class="abs" style="left:0;top:186px;width:163px;text-align:center;font-size:14px;line-height:16px;color:#2e74ff">图形属性</div>
  <div class="abs" style="left:163px;top:186px;width:163px;text-align:center;font-size:14px;line-height:16px;color:#dcdcdc">卡片设置</div>
  <div class="tri" style="top:236px"></div><div class="sec" style="top:231px">圆环</div>
  <div class="lab" style="top:272px">数值颜色</div>
  <div class="box" style="left:102px;top:265px;width:208px"><b class="sw" style="background:#2ca25f"></b><span class="hex">#2ca25f</span><span class="pct">100%</span></div>
  <div class="lab" style="top:318px">背景颜色</div>
  <div class="box" style="left:102px;top:311px;width:208px"><b class="sw" style="background:#fdbb84"></b><span class="hex">#fdbb84</span><span class="pct">100%</span></div>
  <div class="lab" style="top:363px">圆环宽度</div>
  <div class="box" style="left:102px;top:356px;width:176px"><span class="v" style="left:7px">5</span><i style="left:146px"></i><span class="v" style="left:154px;font-size:14px">%</span></div>
  <div class="tri" style="top:409px"></div><div class="sec" style="top:404px">指标</div>
  <div class="lab" style="top:445px">显示内容</div>
  <div class="box" style="left:102px;top:438px;width:208px;font-size:12px"><span class="v" style="left:7px">值+名称</span><svg style="left:188px;top:9.5px" width="12" height="8" viewBox="0 0 12 8" fill="none" stroke="#7d7e82" stroke-width="1.1"><path d="M0.8 0.8 L6 6.6 L11.2 0.8"/></svg></div>
  <div class="lab" style="top:489px">颜色</div>
  <div class="box" style="left:102px;top:482px;width:208px"><b class="sw" style="background:#d9d9d9"></b><span class="hex">#d9d9d9</span><span class="pct">100%</span></div>
  <div class="lab" style="top:535px">小数位数</div>
  <div class="box" style="left:102px;top:528px;width:90px"><span class="v" style="left:7px">1</span></div>
</div>
</body>
</html>
